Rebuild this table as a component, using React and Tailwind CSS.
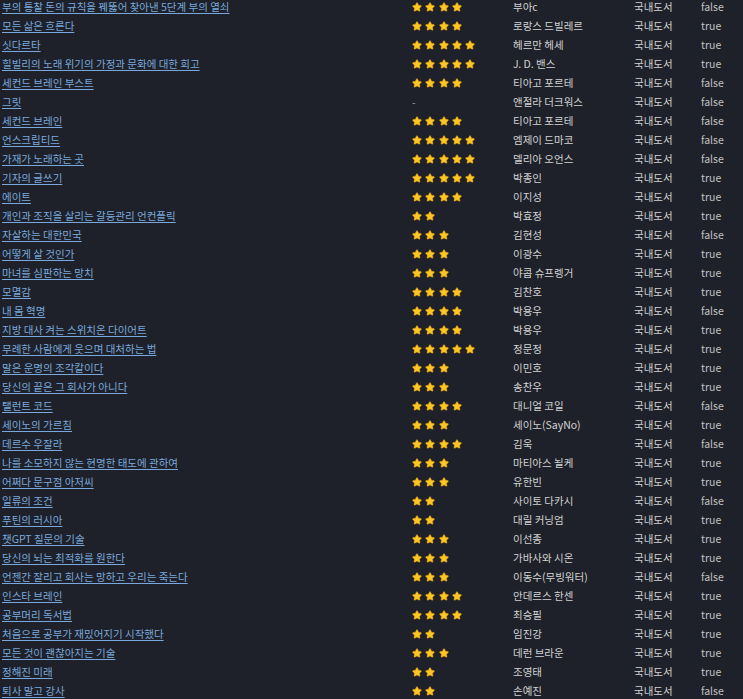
import React from 'react';

const books = [
  ['부의 통찰 돈의 규칙을 꿰뚫어 찾아낸 5단계 부의 열쇠', 4, '부아c', false],
  ['모든 삶은 흐른다', 4, '로랑스 드빌레르', true],
  ['싯다르타', 5, '헤르만 헤세', true],
  ['힐빌리의 노래 위기의 가정과 문화에 대한 회고', 5, 'J. D. 밴스', true],
  ['세컨드 브레인 부스트', 4, '티아고 포르테', false],
  ['그릿', 0, '앤절라 더크워스', false],
  ['세컨드 브레인', 4, '티아고 포르테', false],
  ['언스크립티드', 5, '엠제이 드마코', false],
  ['가재가 노래하는 곳', 5, '델리아 오언스', false],
  ['기자의 글쓰기', 5, '박종인', true],
  ['에이트', 4, '이지성', true],
  ['개인과 조직을 살리는 갈등관리 언컨플릭', 2, '박효정', true],
  ['자살하는 대한민국', 3, '김현성', false],
  ['어떻게 살 것인가', 3, '이광수', true],
  ['마녀를 심판하는 망치', 3, '야콥 슈프렝거', true],
  ['모멸감', 4, '김찬호', true],
  ['내 몸 혁명', 4, '박용우', false],
  ['지방 대사 켜는 스위치온 다이어트', 4, '박용우', true],
  ['무례한 사람에게 웃으며 대처하는 법', 5, '정문정', true],
  ['말은 운명의 조각칼이다', 3, '이민호', true],
  ['당신의 끝은 그 회사가 아니다', 3, '송찬우', true],
  ['탤런트 코드', 4, '대니얼 코일', false],
  ['세이노의 가르침', 3, '세이노(SayNo)', true],
  ['데르수 우잘라', 4, '김욱', false],
  ['나를 소모하지 않는 현명한 태도에 관하여', 3, '마티아스 뇔케', true],
  ['어쩌다 문구점 아저씨', 3, '유한빈', true],
  ['일류의 조건', 2, '사이토 다카시', false],
  ['푸틴의 러시아', 2, '대릴 커닝엄', true],
  ['챗GPT 질문의 기술', 3, '이선종', true],
  ['당신의 뇌는 최적화를 원한다', 3, '가바사와 시온', true],
  ['언젠간 잘리고 회사는 망하고 우리는 죽는다', 3, '이동수(무빙워터)', false],
  ['인스타 브레인', 4, '안데르스 한센', true],
  ['공부머리 독서법', 4, '최승필', true],
  ['처음으로 공부가 재밌어지기 시작했다', 2, '임진강', true],
  ['모든 것이 괜찮아지는 기술', 3, '데런 브라운', true],
  ['정해진 미래', 2, '조영태', true],
  ['퇴사 말고 강사', 2, '손예진', false],
];

// emoji-like chubby star
const Star = () => (
  <svg viewBox="0 0 24 24" className="w-[10px] h-[10px] shrink-0">
    <path
      d="M12 1.5c.6 0 1 .4 1.3 1l2.5 5.2 5.6.8c1.2.2 1.6 1.5.8 2.3l-4.1 4 1 5.6c.2 1.2-1 2-2 1.5L12 19.2l-5.1 2.7c-1 .5-2.2-.3-2-1.5l1-5.6-4.1-4c-.8-.8-.4-2.1.8-2.3l5.6-.8 2.5-5.2c.3-.6.7-1 1.3-1z"
      fill="#fcc623"
      stroke="#e39a12"
      strokeWidth="1.2"
      strokeLinejoin="round"
    />
  </svg>
);

const App = () => {
  return (
    <div className="w-[743px] h-[699px] overflow-hidden bg-[#1e2129] text-[10.5px] text-[#d2d2d2] font-['Noto_Sans_CJK_KR','Noto_Sans',sans-serif]">
      <div className="mt-[-3px]">
        {books.map(([title, stars, author, owned], i) => (
          <div key={i} className="grid grid-cols-[410px_101px_121px_67px_1fr] h-[19px] items-center whitespace-nowrap">
            <div className="pl-[2px]">
              <a href="#" className="text-[#7aa8dc] underline underline-offset-[2px] decoration-[#7aa8dc]">{title}</a>
            </div>
            <div className="pl-[2px] flex items-center gap-[3.3px]">
              {stars > 0 ? Array.from({ length: stars }).map((_, j) => <Star key={j} />) : <span className="text-[#9a9a9a]">-</span>}
            </div>
            <div className="pl-[2px]">{author}</div>
            <div className="pl-[2px]">국내도서</div>
            <div className="pl-[2px] text-[#c0c0c0]">{owned ? 'true' : 'false'}</div>
          </div>
        ))}
      </div>
    </div>
  );
};

export default App;
